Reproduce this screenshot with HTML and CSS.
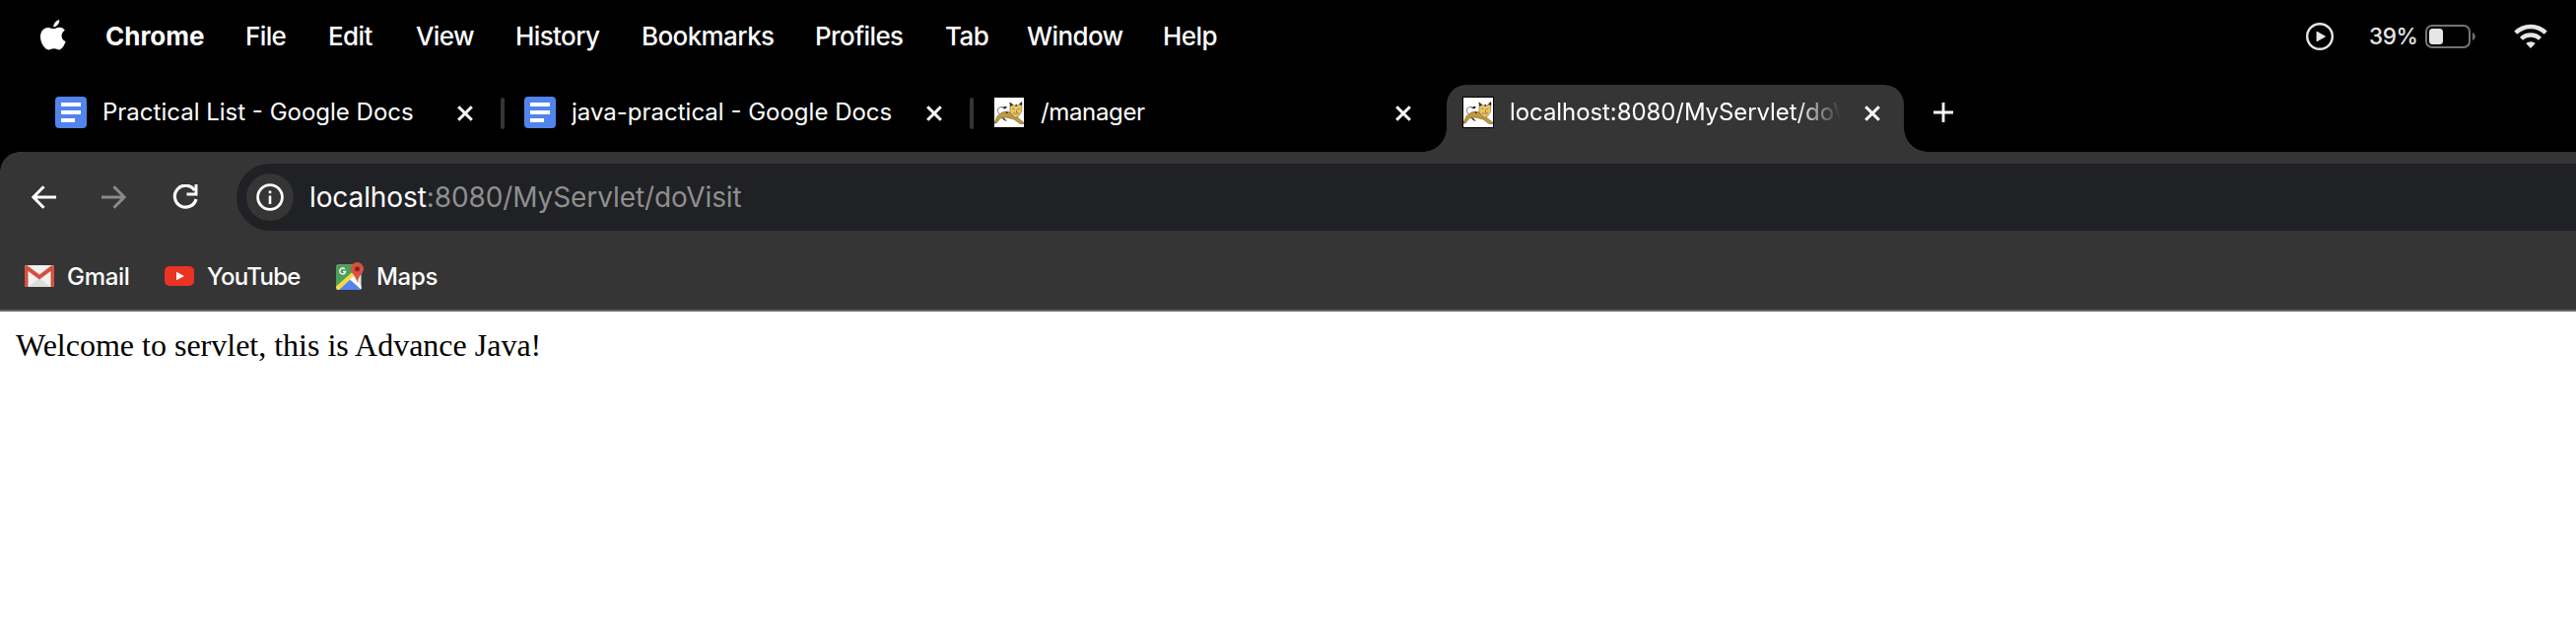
FILE: index.html
```html
<!DOCTYPE html>
<html lang="en">
<head>
<meta charset="utf-8">
<title>localhost:8080/MyServlet/doVisit</title>
<link rel="stylesheet" href="styles.css">
</head>
<body>
<svg class="defs" width="0" height="0">
  <symbol id="docs" viewBox="0 0 32 32">
    <rect width="32" height="32" rx="4" fill="#5383ec"/>
    <path d="M6 8h20M6 16h20M6 24h14" stroke="#fff" stroke-width="4"/>
  </symbol>
  <symbol id="close" viewBox="0 0 16 16">
    <path d="M1.2 1.2l13.6 13.6M14.8 1.2L1.2 14.8" stroke="#fff" stroke-width="3"/>
  </symbol>
  <symbol id="tomcat" viewBox="0 0 30 30">
    <rect width="30" height="30" fill="#fff"/>
    <path d="M6 17.500C2 14 2.500 9 9 9.500" fill="none" stroke="#777" stroke-width="1"/>
    <path d="M8 10.500l3-1.700 2 .7-2 2z" fill="#222"/>
    <path d="M0 25.500l3-6.500 5-4 5-1 5 2 5 4 6.500 5v1.500h-3.500l-6-4.500-8-2-6 1-4 5H0z" fill="#c4983e" stroke="#6d5a30" stroke-width=".6"/>
    <path d="M7.500 20l3 1.500 2.500 2.500-3-1zM11 14.500l3 .5-1 1.200z" fill="#111"/>
    <path d="M16 5l4 3h4l4-3.500-.5 10-4 5.500h-3l-4.500-5z" fill="#e9c765" stroke="#766238" stroke-width=".6"/>
    <path d="M15.500 4.500l3.500 3-2.500 1.500zM28 4l-3 3 3 1zM21.500 7H23v1.500h-1.500z" fill="#222"/>
    <path d="M18.500 11l2 1m5-1l-2 1m-4.500 3.500l3 1 3-1m-2.500-3v3" fill="none" stroke="#8f783c" stroke-width=".9"/>
  </symbol>
</svg>

<header class="menubar">
  <svg class="apple" viewBox="0 0 26 31">
    <path d="M13.300 7.500C13 4 16 .700 19.200 0c.5 3.700-2.700 7.300-5.900 7.500z" fill="#fff"/>
    <path d="M13.500 9.200c1.500 0 3.200-1.500 5.800-1.500 2.300 0 4.300 1.200 5.500 3-4.800 2.900-4.100 9.300.9 11.400-1.200 3.500-3.700 8.300-6.700 8.400-2 0-2.700-1.200-5.200-1.200s-3.300 1.200-5.100 1.200C4.700 30.500 0 23.600 0 17.400 0 11.300 3.700 7.900 7.600 7.900c2.600 0 4.500 1.300 5.900 1.300z" fill="#fff"/>
  </svg>
  <nav class="menus">
    <span class="app">Chrome</span><span class="file">File</span><span class="edit">Edit</span><span class="view">View</span><span class="history">History</span><span class="bm">Bookmarks</span><span class="profiles">Profiles</span><span class="tabm">Tab</span><span class="window">Window</span><span>Help</span>
  </nav>
  <div class="status">
    <svg class="play" viewBox="0 0 28 28"><circle cx="14" cy="14" r="12.800" fill="none" stroke="#e6e6e6" stroke-width="2.400"/><path d="M10.600 9.500v9a.6.6 0 0 0 .9.500l8-4.500a.6.6 0 0 0 0-1l-8-4.500a.6.6 0 0 0-.9.500z" fill="#e6e6e6"/></svg>
    <span class="percent">39%</span>
    <svg class="battery" viewBox="0 0 51 24"><rect x="1" y="1" width="44" height="22" rx="6" fill="none" stroke="#747474" stroke-width="2"/><rect x="4" y="4" width="14" height="16" rx="3.500" fill="#e6e6e6"/><path d="M48 8c3.600 1.500 3.600 6.500 0 8z" fill="#747474"/></svg>
    <svg class="wifi" viewBox="0 0 34 25"><g fill="none" stroke="#e6e6e6" stroke-width="4.400"><path d="M1.800 9.200a21.600 21.600 0 0 1 30.400 0"/><path d="M7.500 15.300a13.600 13.600 0 0 1 19 0"/></g><path d="M17 25l-4.800-4.900a7 7 0 0 1 9.600 0z" fill="#e6e6e6"/></svg>
  </div>
</header>

<div class="tabstrip">
  <div class="tab first"><svg class="fav"><use href="#docs"/></svg><span class="title">Practical List - Google Docs</span><svg class="x"><use href="#close"/></svg></div>
  <i class="sep"></i>
  <div class="tab"><svg class="fav"><use href="#docs"/></svg><span class="title">java-practical - Google Docs</span><svg class="x"><use href="#close"/></svg></div>
  <i class="sep"></i>
  <div class="tab"><svg class="fav cat"><use href="#tomcat"/></svg><span class="title tight">/manager</span><svg class="x"><use href="#close"/></svg></div>
  <div class="tab active"><svg class="fav cat boxed"><use href="#tomcat"/></svg><span class="title fade">localhost:8080/MyServlet/doVisit</span><svg class="x"><use href="#close"/></svg></div>
  <svg class="plus" viewBox="0 0 20 20"><path d="M10 0v20M0 10h20" stroke="#fff" stroke-width="2.800"/></svg>
</div>

<div class="chrome">
  <div class="toolbar">
    <svg class="nav" viewBox="0 0 26 24"><path d="M25 12H2M12.500 1.200L1.900 12l10.600 10.800" fill="none" stroke="#fff" stroke-width="3"/></svg>
    <svg class="nav fwd" viewBox="0 0 26 24"><path d="M0 12h23M12.500 1.200L23.100 12 12.500 22.800" fill="none" stroke="#8a8a8a" stroke-width="3"/></svg>
    <svg class="reload" viewBox="0 0 26 26"><path d="M22.500 6A11 11 0 1 0 24 15" fill="none" stroke="#fff" stroke-width="3.200"/><path d="M25.500 0v11.500H14.500V8.500h8V0z" fill="#fff"/></svg>
    <div class="omnibox">
      <div class="info"><svg viewBox="0 0 28 28"><circle cx="14" cy="14" r="12.400" fill="none" stroke="#fff" stroke-width="2.800"/><path d="M14 12.500V21M14 7.500v2.800" stroke="#fff" stroke-width="2.600"/></svg></div>
      <div class="url"><b>localhost</b>:8080/MyServlet/doVisit</div>
    </div>
  </div>
  <div class="bookmarks">
    <svg class="gmail" viewBox="0 0 30 22"><rect width="30" height="22" rx="2" fill="#f1f1f1"/><path d="M4 22l11-9 11 9z" fill="#dcdcdc"/><path d="M0 3v17a2 2 0 0 0 2 2h1.500V6L15 14.500 26.500 6v16H28a2 2 0 0 0 2-2V2a2 2 0 0 0-3-1.500L15 9.500 3 .5A2 2 0 0 0 0 2z" fill="#d5503f"/></svg>
    <span class="gm">Gmail</span>
    <svg class="yt" viewBox="0 0 30 20"><rect width="30" height="20" rx="5" fill="#ea3323"/><path d="M12 5.800l8 4.200-8 4.200z" fill="#fff"/></svg>
    <span class="you">YouTube</span>
    <svg class="maps" viewBox="0 0 28 28"><rect y="2.500" width="25.500" height="25.500" rx="2" fill="#e3e3e3"/><path d="M2 2.500h16L20 11 0 27V4.500a2 2 0 0 1 2-2z" fill="#4e9f5b"/><path d="M1 28l13-13 11 12.500-.5.5z" fill="#5383ec"/><path d="M0 24.500L17.500 9l2.500 3.500L3 28H1.500L0 26z" fill="#f8d84a"/><path d="M14 17.500l3-3 8.500 9.500v3.500z" fill="#fff"/><path d="M8.900 6.900A3 3 0 1 0 9.700 9.500H7" fill="none" stroke="#fff" stroke-width="1.300"/><path d="M21.500 0A6.500 6.500 0 0 0 15 6.500c0 5.500 5.500 6.500 6.500 14.500 1-8 6.500-9 6.500-14.500A6.500 6.500 0 0 0 21.500 0z" fill="#d85140"/><circle cx="21.500" cy="6.700" r="2.500" fill="#7d281f"/></svg>
    <span>Maps</span>
  </div>
</div>

<main class="page">Welcome to servlet, this is Advance Java!</main>
</body>
</html>
```
FILE: styles.css
```css
* { box-sizing: border-box; }
body { margin: 0; background: #fff; height: 640px; overflow: hidden; font-family: Inter, "Liberation Sans", sans-serif; color: #fff; white-space: nowrap; }
svg { display: block; flex: none; }
.defs { position: absolute; }

.menubar { height: 86px; padding: 0 29px 13px 41px; background: #000; display: flex; align-items: center; font-size: 26px; font-weight: 500; }
.apple { width: 26px; height: 31px; margin: -3px 40px 0 0; }
.menus { display: flex; letter-spacing: -0.6px; }
.menus span { flex: none; }
.menus .app { width: 142px; font-weight: 700; letter-spacing: 0; }
.file { width: 84px; }
.edit { width: 89px; }
.view { width: 101px; }
.history { width: 128px; }
.bm { width: 176px; }
.profiles { width: 132px; }
.tabm { width: 83px; }
.window { width: 138px; }
.status { margin-left: auto; display: flex; align-items: center; color: #e6e6e6; }
.play { width: 28px; height: 28px; margin-right: 36px; }
.percent { width: 57px; font-size: 22.500px; letter-spacing: -0.4px; }
.battery { width: 51px; height: 24px; margin-right: 39px; }
.wifi { width: 34px; height: 25px; }

.tabstrip { height: 68px; background: #000; display: flex; padding-left: 56px; font-size: 24px; }
.tab { height: 68px; width: 452px; padding: 0 28px 12px 20px; display: flex; align-items: center; }
.tab.first { padding-left: 0; }
.tab:nth-of-type(2) { width: 472px; }
.tab:nth-of-type(3) { width: 480px; padding-right: 36px; }
.fav { width: 32px; height: 32px; margin-right: 16px; }
.cat { padding: 1px; }
.boxed { background: #000; }
.title { flex: 1; overflow: hidden; margin-top: -1px; }
.tight { letter-spacing: -0.35px; }
.x { width: 16px; height: 16px; margin-top: 1px; }
.sep { flex: none; width: 4px; height: 32px; margin-top: 13px; border-radius: 2px; background: #353535; }
.tab.active { position: relative; width: 464px; padding: 0 24px 12px 16px; background: #353535; border-radius: 20px 20px 0 0; }
.active::before, .active::after { content: ""; position: absolute; bottom: 0; width: 24px; height: 24px; }
.active::before { left: -24px; background: radial-gradient(circle at 0 0, transparent 23.500px, #353535 24px); }
.active::after { right: -24px; background: radial-gradient(circle at 100% 0, transparent 23.500px, #353535 24px); }
.active .title { margin-right: 24px; letter-spacing: -0.08px; }
.fade { -webkit-mask-image: linear-gradient(90deg, #000 290px, transparent 336px); mask-image: linear-gradient(90deg, #000 290px, transparent 336px); }
.plus { width: 20px; height: 20px; margin: 18px 0 0 30px; }

.chrome { height: 162px; background: linear-gradient(#353535, #353535) 20px 0 no-repeat, radial-gradient(circle at 20px 20px, #353535 19.500px, #000 20px) 0 0 / 20px 20px no-repeat, linear-gradient(#353535, #353535) 0 20px no-repeat; border-bottom: 2px solid #686464; }
.toolbar { height: 92px; padding: 12px 0 12px 32px; display: flex; align-items: center; }
.nav { width: 26px; height: 24px; margin-right: 45px; }
.fwd { margin-right: 46px; }
.reload { width: 26px; height: 26px; margin-right: 39px; }
.omnibox { flex: 1; height: 68px; padding-left: 10px; border-radius: 34px 0 0 34px; background: #202124; display: flex; align-items: center; }
.info { width: 48px; height: 48px; border-radius: 50%; background: #353535; display: grid; place-items: center; margin-right: 16px; }
.info svg { width: 28px; height: 28px; }
.url { font-size: 28px; color: #8f8f8f; letter-spacing: -0.1px; }
.url b { color: #fff; font-weight: 400; }
.bookmarks { height: 68px; padding: 0 0 0 25px; display: flex; align-items: center; font-size: 24px; font-weight: 500; letter-spacing: -0.3px; }
.gmail { width: 30px; height: 22px; margin-right: 13px; }
.gm { width: 99px; }
.yt { width: 30px; height: 20px; margin-right: 13px; }
.you { width: 131px; letter-spacing: -0.7px; }
.maps { width: 28px; height: 28px; margin-right: 13px; }

.page { padding: 16px; color: #000; font: 32px/37px "Liberation Serif", "Times New Roman", serif; }
```
